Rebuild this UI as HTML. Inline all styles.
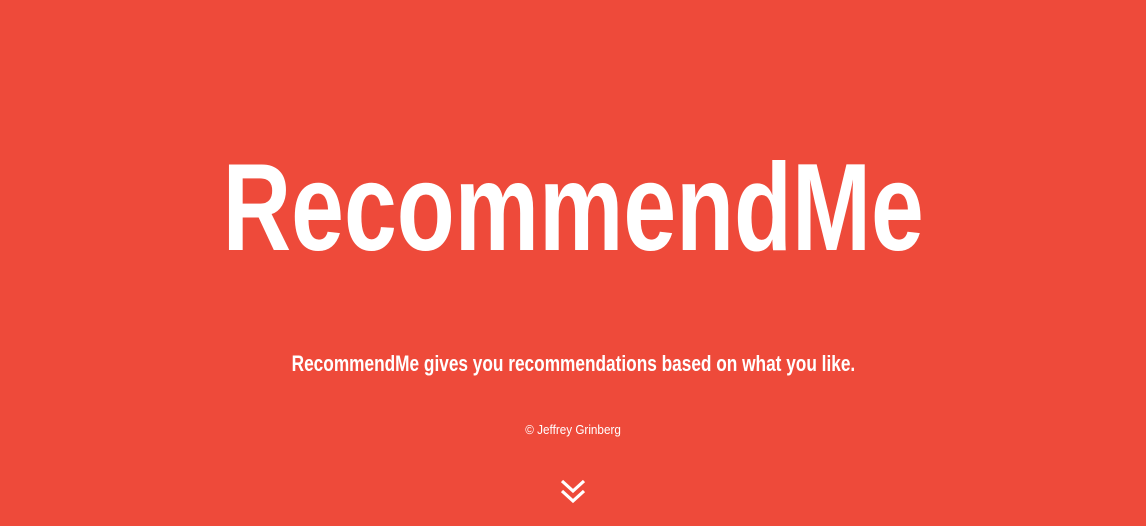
<!DOCTYPE html>
<html><head><style>
html,body{margin:0;padding:0;width:1146px;height:526px;overflow:hidden;background:#ee4a3a;font-family:"Liberation Sans Narrow","Liberation Sans",sans-serif;color:#fff}
.c{position:absolute;left:0;width:1146px;text-align:center;white-space:nowrap}
.c span{display:inline-block;transform-origin:center}
</style></head><body>
<div class="c" style="top:133px;font-size:124px;line-height:150px;font-weight:bold"><span style="transform:scaleX(0.765)">RecommendMe</span></div>
<div class="c" style="top:349px;font-size:22px;font-weight:bold;line-height:30px"><span style="transform:scaleX(0.784)">RecommendMe gives you recommendations based on what you like.</span></div>
<div class="c" style="top:422px;font-size:13px;line-height:16px"><span style="transform:scaleX(0.9)">© Jeffrey Grinberg</span></div>
<svg style="position:absolute;left:558px;top:476px" width="32" height="32" viewBox="0 0 32 32">
<path d="M4 5 L15 15 L26 5" fill="none" stroke="#fff" stroke-width="3.2"/>
<path d="M4 15 L15 25 L26 15" fill="none" stroke="#fff" stroke-width="3.2"/>
</svg>
</body></html>
